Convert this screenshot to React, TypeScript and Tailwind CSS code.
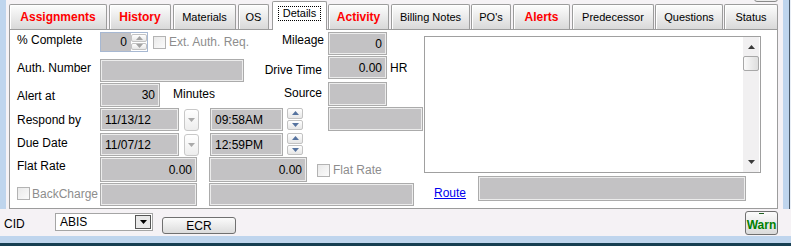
import React from "react";

const field =
  "flex items-center border border-[#ababab] bg-[#c3c2c4] shadow-[inset_0_0_0_1px_#ececec] px-[4px] text-[12px] leading-[14px] text-black whitespace-nowrap";

const label = "text-[12px] leading-[14px] text-black whitespace-nowrap";
const dimLabel = "text-[12px] leading-[14px] text-[#8d8d8d] whitespace-nowrap";

function Tri({ up, color }: { up?: boolean; color: string }) {
  return (
    <svg width="7" height="4" viewBox="0 0 7 4">
      <polygon points={up ? "3.5,0 7,4 0,4" : "0,0 7,0 3.5,4"} fill={color} />
    </svg>
  );
}

function Field({ cls, value, right }: { cls: string; value?: string; right?: boolean }) {
  return <div className={`${field} ${cls} ${right ? "justify-end" : ""}`}>{value}</div>;
}

function Spin({ color, cls }: { color: string; cls: string }) {
  return (
    <div className={`flex flex-col gap-px ${cls}`}>
      <div className="flex flex-1 items-center justify-center rounded-[2px] border border-[#c2c2c2] bg-gradient-to-b from-white to-[#e6e6e6]">
        <Tri up color={color} />
      </div>
      <div className="flex flex-1 items-center justify-center rounded-[2px] border border-[#c2c2c2] bg-gradient-to-b from-white to-[#e6e6e6]">
        <Tri color={color} />
      </div>
    </div>
  );
}

function DropBtn({ cls }: { cls: string }) {
  return (
    <div
      className={`flex items-center justify-center rounded-[3px] border border-[#c8c8c8] bg-gradient-to-b from-white to-[#ededed] ${cls}`}
    >
      <Tri color="#a9a9a9" />
    </div>
  );
}

function Check({ cls }: { cls: string }) {
  return (
    <div
      className={`size-[13px] border border-[#b3b3b3] bg-gradient-to-br from-[#e9e9e9] to-[#fbfbfb] ${cls}`}
    />
  );
}

const TABS = [
  { label: "Assignments", red: true, cls: "w-[98px]" },
  { label: "History", red: true, cls: "ml-[2px] w-[62px]" },
  { label: "Materials", cls: "ml-[2px] w-[63px]" },
  { label: "OS", cls: "ml-[2px] w-[31px]" },
  { label: "Details", active: true, cls: "ml-[3px] w-[55px]" },
  { label: "Activity", red: true, cls: "ml-px w-[61px]" },
  { label: "Billing Notes", cls: "ml-[2px] w-[79px]" },
  { label: "PO's", cls: "ml-px w-[40px]" },
  { label: "Alerts", red: true, cls: "ml-[2px] w-[57px]" },
  { label: "Predecessor", cls: "ml-[2px] w-[82px]" },
  { label: "Questions", cls: "ml-px w-[68px]" },
  { label: "Status", cls: "ml-px w-[54px]" },
];

function TabStrip() {
  return (
    <div className="flex h-[29px] items-end">
      {TABS.map((t) =>
        t.active ? (
          <div
            key={t.label}
            className={`relative z-10 -mb-px flex h-[29px] justify-center rounded-t-[2px] border border-b-0 border-[#9c9c9c] bg-white pt-[4px] ${t.cls}`}
          >
            <span className="h-[15px] border border-dotted border-black px-[4px] text-[11px] leading-[13px] text-black">
              {t.label}
            </span>
          </div>
        ) : (
          <div
            key={t.label}
            className={`flex h-[25px] items-center justify-center rounded-t-[2px] border border-b-0 border-[#9c9c9c] bg-gradient-to-b from-[#fdfdfd] to-[#d9d9d9] shadow-[inset_1px_1px_0_#ffffff] ${t.cls}`}
          >
            {t.red ? (
              <span className="text-[12px] font-bold leading-[14px] text-[#ff0000]">{t.label}</span>
            ) : (
              <span className="text-[11px] leading-[13px] text-black">{t.label}</span>
            )}
          </div>
        )
      )}
    </div>
  );
}

function FormRows() {
  return (
    <div className="flex w-[414px] flex-col pl-[7px] pt-[2px]">
      {/* % Complete / Mileage */}
      <div className="grid h-[24px] grid-cols-[83px_228px_95px]">
        <span className={`${label} mt-px`}>% Complete</span>
        <div className="flex items-start">
          <div className="flex h-[20px] w-[48px] border border-[#a7b8d2]">
            <div className="flex w-[30px] items-center justify-end bg-[#c3c2c4] pr-[4px] text-[12px] leading-[14px]">0</div>
            <Spin color="#a3a3a3" cls="w-[16px] py-px" />
          </div>
          <Check cls="ml-[5px] mt-[4px]" />
          <span className={`${dimLabel} ml-[3px] mt-[3px]`}>Ext. Auth. Req.</span>
          <span className={`${label} ml-auto mr-[4px] mt-px`}>Mileage</span>
        </div>
        <div className="flex items-start">
          <Field cls="h-[23px] w-[59px]" value="0" right />
        </div>
      </div>

      {/* Auth. Number / Drive Time */}
      <div className="grid h-[26px] grid-cols-[83px_228px_95px]">
        <span className={`${label} mt-[5px]`}>Auth. Number</span>
        <div className="flex items-start">
          <Field cls="mt-[3px] h-[23px] w-[144px]" />
          <span className={`${label} ml-auto mr-[6px] mt-[7px]`}>Drive Time</span>
        </div>
        <div className="flex items-start">
          <Field cls="h-[23px] w-[59px]" value="0.00" right />
          <span className={`${label} ml-[3px] mt-[5px]`}>HR</span>
        </div>
      </div>

      {/* Alert at / Source */}
      <div className="grid h-[25px] grid-cols-[83px_228px_95px]">
        <span className={`${label} mt-[7px]`}>Alert at</span>
        <div className="flex items-start">
          <Field cls="mt-px h-[24px] w-[60px]" value="30" right />
          <span className={`${label} ml-[13px] mt-[5px]`}>Minutes</span>
          <span className={`${label} ml-auto mr-[6px] mt-[4px]`}>Source</span>
        </div>
        <div className="flex items-start">
          <Field cls="h-[24px] w-[59px]" />
        </div>
      </div>

      {/* Respond by */}
      <div className="grid h-[25px] grid-cols-[83px_228px_95px]">
        <span className={`${label} mt-[6px]`}>Respond by</span>
        <div className="flex items-start">
          <Field cls="mt-px h-[23px] w-[79px]" value="11/13/12" />
          <DropBtn cls="ml-[5px] mt-[2px] h-[22px] w-[15px]" />
          <Field cls="ml-[11px] mt-px h-[23px] w-[73px]" value="09:58AM" />
          <Spin color="#56739f" cls="ml-[4px] mt-px h-[22px] w-[16px]" />
        </div>
        <div className="flex items-start">
          <Field cls="h-[24px] w-[95px]" />
        </div>
      </div>

      {/* Due Date */}
      <div className="grid h-[25px] grid-cols-[83px_228px_95px]">
        <span className={`${label} mt-[4px]`}>Due Date</span>
        <div className="flex items-start">
          <Field cls="mt-px h-[23px] w-[79px]" value="11/07/12" />
          <DropBtn cls="ml-[5px] mt-[2px] h-[22px] w-[15px]" />
          <Field cls="ml-[11px] mt-px h-[23px] w-[73px]" value="12:59PM" />
          <Spin color="#56739f" cls="ml-[4px] mt-px h-[22px] w-[16px]" />
        </div>
        <div />
      </div>

      {/* Flat Rate */}
      <div className="grid h-[26px] grid-cols-[83px_323px]">
        <span className={`${label} mt-[2px]`}>Flat Rate</span>
        <div className="flex items-start">
          <Field cls="h-[25px] w-[97px]" value="0.00" right />
          <Field cls="ml-[12px] h-[25px] w-[98px]" value="0.00" right />
          <Check cls="ml-[10px] mt-[7px]" />
          <span className={`${dimLabel} ml-[3px] mt-[6px]`}>Flat Rate</span>
        </div>
      </div>

      {/* BackCharge */}
      <div className="grid h-[23px] grid-cols-[83px_323px]">
        <div className="flex items-start">
          <Check cls="mt-[4px]" />
          <span className={`${dimLabel} ml-[2px] mt-[4px]`}>BackCharge</span>
        </div>
        <div className="flex items-start">
          <Field cls="h-[23px] w-[97px]" />
          <Field cls="ml-[12px] h-[23px] w-[205px]" />
        </div>
      </div>
    </div>
  );
}

function NotesArea() {
  return (
    <div className="flex w-[337px] flex-col">
      <div className="mt-[6px] flex h-[137px] justify-end border border-[#a0a0a0] bg-white">
        <div className="mr-px flex w-[16px] flex-col items-center bg-[#f1f0f1]">
          <div className="mt-[8px]">
            <Tri up color="#3a3a3a" />
          </div>
          <div className="mt-[7px] h-[15px] w-[16px] rounded-[2px] border border-[#a8a8a8] bg-gradient-to-r from-[#fafafa] to-[#dedede]" />
          <div className="mb-[8px] mt-auto">
            <Tri color="#3a3a3a" />
          </div>
        </div>
      </div>
      <div className="mt-[3px] flex items-start">
        <span className="ml-[10px] mt-[10px] text-[12px] leading-[14px] text-[#0000ee] underline">Route</span>
        <Field cls="ml-[12px] h-[25px] w-[268px]" />
      </div>
    </div>
  );
}

export default function App() {
  return (
    <div className="flex h-[246px] w-[791px] flex-col bg-[#bfd5ed] font-['Liberation_Sans',Arial,Helvetica,sans-serif]">
      <div className="flex h-[209px]">
        <div className="w-[6px] bg-[#bfd5ed]" />
        <div className="relative flex w-[777px] flex-col bg-[#f5f2f5] pl-[3px]">
          <div className="absolute left-[748px] top-[-3px] h-[5px] w-[24px] rounded-b-[3px] border border-[#8a8a8a] bg-[#ececec]" />
          <TabStrip />
          <div className="flex h-[180px] w-[769px] border border-[#9c9c9c] bg-white">
            <FormRows />
            <NotesArea />
          </div>
        </div>
        <div className="w-[6px] bg-[#bfd5ed]" />
        <div className="w-px bg-[#4a5a6a]" />
        <div className="w-px bg-[#e8eef6]" />
      </div>

      <div className="flex h-[27px] items-start bg-[#f5f2f5]">
        <span className={`${label} ml-[4px] mt-[8px] w-[51px]`}>CID</span>
        <div className="mt-[4px] flex h-[18px] w-[98px] items-center border border-[#a5a5a5] bg-white pl-[4px]">
          <span className="text-[12px] leading-[14px] text-black">ABIS</span>
          <div className="ml-auto mr-px flex h-[14px] w-[16px] items-center justify-center border border-[#555555] bg-[#e9e9e9]">
            <Tri color="#000000" />
          </div>
        </div>
        <div className="ml-[9px] mt-[8px] flex h-[17px] w-[74px] items-center justify-center rounded-[3px] border border-[#707070] bg-gradient-to-b from-[#fbfbfb] to-[#dcdcdc] text-[12px] leading-[14px] text-black">
          ECR
        </div>
        <div className="relative ml-auto mr-[13px] mt-[2px] flex h-[24px] w-[33px] items-end justify-center rounded-[3px] border border-[#707070] bg-gradient-to-b from-[#fbfbfb] to-[#dadada] pb-[2px]">
          <div className="absolute left-[13px] top-px h-px w-[5px] bg-[#1f5f1f]" />
          <span className="text-[12px] font-bold leading-[14px] text-[#008000]">Warn</span>
        </div>
      </div>

      <div className="h-[7px] bg-[#bfd5ed]" />
      <div className="h-[3px] bg-[#173f52]" />
    </div>
  );
}
